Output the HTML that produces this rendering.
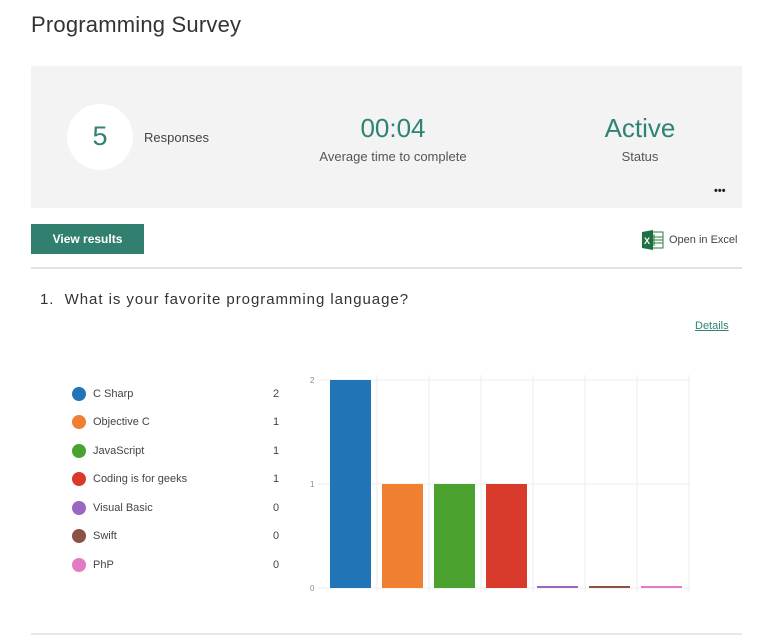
<!DOCTYPE html>
<html><head><style>
body{margin:0;width:784px;height:638px;background:#fff;font-family:"Liberation Sans",sans-serif;position:relative;overflow:hidden;color:#333}
.a{position:absolute;white-space:nowrap}
.t{color:#2f8374}
.leg{font-size:11px;color:#444}
</style></head><body>
<div class="a" style="left:31px;top:12px;font-size:22px;color:#333;letter-spacing:0.2px">Programming Survey</div>
<div class="a" style="left:31px;top:66px;width:711px;height:142px;background:#f3f3f3"></div>
<div class="a" style="left:67px;top:104px;width:66px;height:66px;border-radius:50%;background:#fff"></div>
<div class="a t" style="left:67px;top:121px;width:66px;text-align:center;font-size:27px">5</div>
<div class="a" style="left:144px;top:130px;font-size:13px;color:#444">Responses</div>
<div class="a t" style="left:293px;top:113px;width:200px;text-align:center;font-size:26px">00:04</div>
<div class="a" style="left:293px;top:149px;width:200px;text-align:center;font-size:13px;color:#555">Average time to complete</div>
<div class="a t" style="left:580px;top:113px;width:120px;text-align:center;font-size:26px">Active</div>
<div class="a" style="left:580px;top:149px;width:120px;text-align:center;font-size:13px;color:#555">Status</div>
<div class="a" style="left:714px;top:185px;font-size:11px;font-weight:bold;color:#222;letter-spacing:0px">•••</div>
<div class="a" style="left:31px;top:224px;width:113px;height:30px;background:#31806f;color:#fff;font-size:12px;font-weight:bold;text-align:center;line-height:30px">View results</div>
<svg class="a" style="left:642px;top:230px" width="22" height="20"><rect x="8" y="2" width="13" height="16" fill="#fff" stroke="#2a7a3f"/><path d="M12 4v12M8 7h13M8 10h13M8 13h13" stroke="#2a7a3f" stroke-width="1"/><path d="M0 2l11-2v20L0 18z" fill="#1e7145"/><text x="2" y="14" font-size="9" font-weight="bold" fill="#fff" font-family="Liberation Sans">X</text></svg>
<div class="a" style="left:669px;top:234px;font-size:11px;color:#444">Open in Excel</div>
<div class="a" style="left:31px;top:267px;width:711px;height:2px;background:#e3e3e3"></div>
<div class="a" style="left:40px;top:291px;font-size:15px;color:#333;letter-spacing:0.95px">1.&nbsp; What is your favorite programming language?</div>
<div class="a t" style="left:695px;top:320px;font-size:11px;text-decoration:underline">Details</div>
<svg class="a" style="left:0;top:0" width="784" height="638">
<circle cx="79" cy="394" r="7" fill="#2174b5"/>
<circle cx="79" cy="422" r="7" fill="#f07f31"/>
<circle cx="79" cy="451" r="7" fill="#4ca22f"/>
<circle cx="79" cy="479" r="7" fill="#d83b2b"/>
<circle cx="79" cy="508" r="7" fill="#9866c3"/>
<circle cx="79" cy="536" r="7" fill="#8a5344"/>
<circle cx="79" cy="565" r="7" fill="#e27bc4"/>
<g stroke="#ececec" stroke-width="1">
<path d="M318 380H690M318 484H690M318 588H690"/>
<path d="M377 375V592M429 375V592M481 375V592M533 375V592M585 375V592M637 375V592M689 375V592"/>
</g>
<g font-size="8" fill="#888" font-family="Liberation Sans"><text x="310" y="383">2</text><text x="310" y="487">1</text><text x="310" y="591">0</text></g>
<rect x="330" y="380" width="41" height="208" fill="#2174b5"/>
<rect x="382" y="484" width="41" height="104" fill="#f07f31"/>
<rect x="434" y="484" width="41" height="104" fill="#4ca22f"/>
<rect x="486" y="484" width="41" height="104" fill="#d83b2b"/>
<rect x="537" y="586" width="41" height="2" fill="#9866c3"/>
<rect x="589" y="586" width="41" height="2" fill="#8a5344"/>
<rect x="641" y="586" width="41" height="2" fill="#e27bc4"/>
<rect x="31" y="633" width="711" height="2" fill="#e8e8e8"/>
</svg>
<div class="a leg" style="left:93px;top:388px">C Sharp</div>
<div class="a leg" style="left:93px;top:416px">Objective C</div>
<div class="a leg" style="left:93px;top:445px">JavaScript</div>
<div class="a leg" style="left:93px;top:473px">Coding is for geeks</div>
<div class="a leg" style="left:93px;top:502px">Visual Basic</div>
<div class="a leg" style="left:93px;top:530px">Swift</div>
<div class="a leg" style="left:93px;top:559px">PhP</div>
<div class="a leg" style="left:273px;top:388px">2</div>
<div class="a leg" style="left:273px;top:416px">1</div>
<div class="a leg" style="left:273px;top:445px">1</div>
<div class="a leg" style="left:273px;top:473px">1</div>
<div class="a leg" style="left:273px;top:502px">0</div>
<div class="a leg" style="left:273px;top:530px">0</div>
<div class="a leg" style="left:273px;top:559px">0</div>
</body></html>
